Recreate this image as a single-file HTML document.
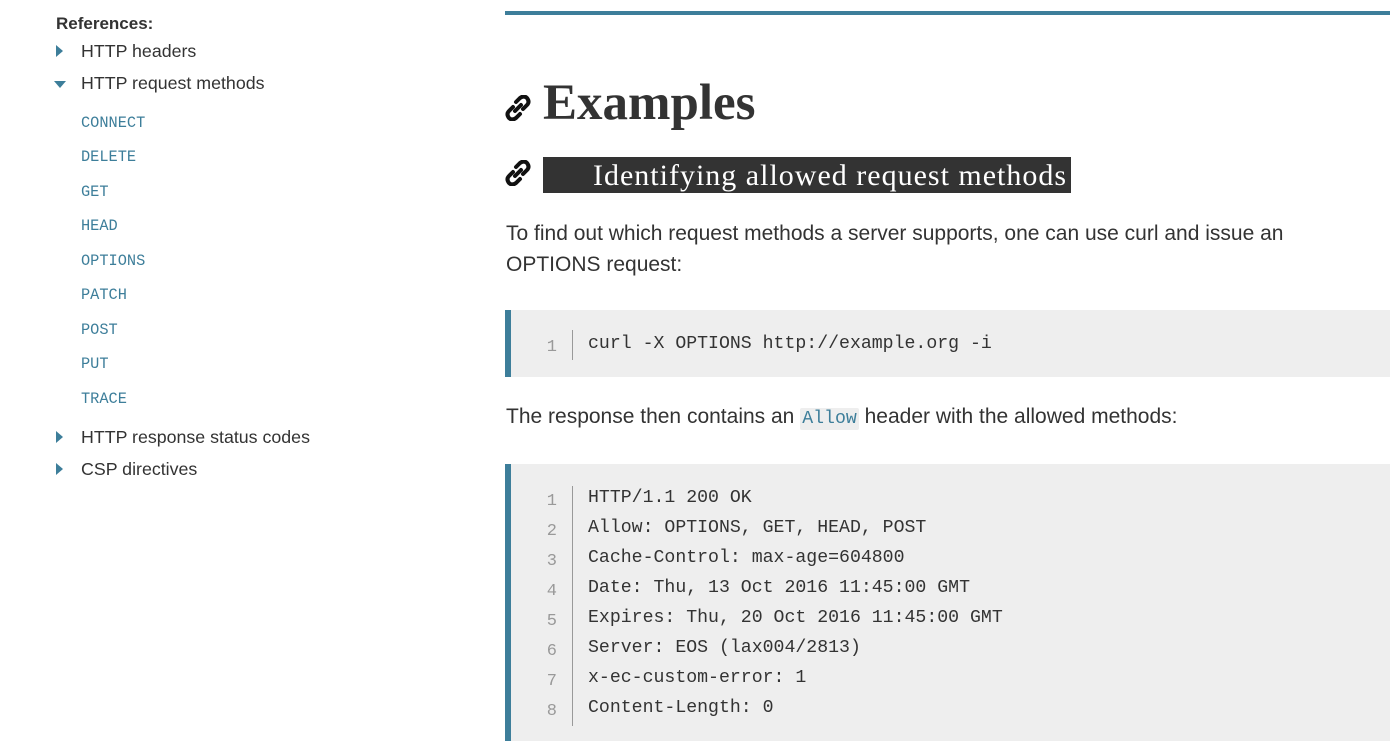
<!DOCTYPE html>
<html><head><style>
body{margin:0;width:1390px;height:755px;background:#fff;font-family:"Liberation Sans",sans-serif;color:#333;position:relative;overflow:hidden}
.a{position:absolute;white-space:nowrap}
.side{font-size:17.8px;color:#333}
.m{font-family:"Liberation Mono",monospace}
.sl{font-size:15.3px;color:#3d7e9a;left:81px}
.tri{position:absolute;width:0;height:0}
.p{font-size:21px;color:#333}
.code{position:absolute;left:505px;width:885px;background:#eee;border-left:6px solid #3d7e9a;box-sizing:border-box}
.ln{position:absolute;left:535px;width:22px;text-align:right;font-size:17px;color:#999;font-family:"Liberation Mono",monospace}
.cl{position:absolute;left:588px;font-size:18.2px;color:#333;font-family:"Liberation Mono",monospace;white-space:nowrap}
</style></head><body>
<div class="a side" style="left:56px;top:14px;font-weight:bold;font-size:17px">References:</div>
<div class="tri" style="left:56px;top:45px;border-left:7px solid #3d7e9a;border-top:6px solid transparent;border-bottom:6px solid transparent"></div>
<div class="a side" style="left:81px;top:41px">HTTP headers</div>
<div class="tri" style="left:54px;top:81px;border-top:7px solid #3d7e9a;border-left:6px solid transparent;border-right:6px solid transparent"></div>
<div class="a side" style="left:81px;top:73px">HTTP request methods</div>
<div class="a m sl" style="top:114px">CONNECT</div>
<div class="a m sl" style="top:148px">DELETE</div>
<div class="a m sl" style="top:183px">GET</div>
<div class="a m sl" style="top:217px">HEAD</div>
<div class="a m sl" style="top:252px">OPTIONS</div>
<div class="a m sl" style="top:286px">PATCH</div>
<div class="a m sl" style="top:321px">POST</div>
<div class="a m sl" style="top:355px">PUT</div>
<div class="a m sl" style="top:390px">TRACE</div>
<div class="tri" style="left:56px;top:431px;border-left:7px solid #3d7e9a;border-top:6px solid transparent;border-bottom:6px solid transparent"></div>
<div class="a side" style="left:81px;top:427px">HTTP response status codes</div>
<div class="tri" style="left:56px;top:463px;border-left:7px solid #3d7e9a;border-top:6px solid transparent;border-bottom:6px solid transparent"></div>
<div class="a side" style="left:81px;top:459px">CSP directives</div>

<div style="position:absolute;left:505px;top:11px;width:885px;height:4px;background:#3d7e9a"></div>

<svg style="position:absolute;left:505px;top:95px" width="26" height="26" viewBox="0 0 26 26"><g fill="none" stroke="#111" stroke-width="4" stroke-linecap="round"><path d="M11 7 L15 3 Q19 0 22 3 Q25 7 22 10 L18 14"/><path d="M15 19 L11 23 Q7 26 4 23 Q1 19 4 16 L8 12"/><path d="M10 16 L16 10"/></g></svg>
<div class="a" style="left:543px;top:74px;font-family:'Liberation Serif',serif;font-weight:bold;font-size:51px;color:#333">Examples</div>

<svg style="position:absolute;left:505px;top:160px" width="26" height="26" viewBox="0 0 26 26"><g fill="none" stroke="#111" stroke-width="4" stroke-linecap="round"><path d="M11 7 L15 3 Q19 0 22 3 Q25 7 22 10 L18 14"/><path d="M15 19 L11 23 Q7 26 4 23 Q1 19 4 16 L8 12"/><path d="M10 16 L16 10"/></g></svg>
<div style="position:absolute;left:543px;top:157px;width:528px;height:36px;background:#333"></div>
<div class="a" style="left:593px;top:157px;font-family:'Liberation Serif',serif;font-size:30px;letter-spacing:1px;line-height:38px;color:#fff">Identifying allowed request methods</div>

<div class="a p" style="left:506px;top:222px">To find out which request methods a server supports, one can use curl and issue an</div>
<div class="a p" style="left:506px;top:253px">OPTIONS request:</div>

<div class="code" style="top:310px;height:67px"></div>
<div style="position:absolute;left:572px;top:330px;width:1px;height:30px;background:#999"></div>
<div class="ln" style="top:338px">1</div>
<div class="cl" style="top:334px">curl -X OPTIONS http://example.org -i</div>

<div class="a p" style="left:506px;top:405px">The response then contains an <span class="m" style="background:#eee;color:#3d7e9a;font-size:18.2px;padding:1px 2px;border-radius:2px">Allow</span> header with the allowed methods:</div>

<div class="code" style="top:464px;height:277px"></div>
<div style="position:absolute;left:572px;top:486px;width:1px;height:240px;background:#999"></div>
<div class="ln" style="top:492px">1</div><div class="cl" style="top:488px">HTTP/1.1 200 OK</div>
<div class="ln" style="top:522px">2</div><div class="cl" style="top:518px">Allow: OPTIONS, GET, HEAD, POST</div>
<div class="ln" style="top:552px">3</div><div class="cl" style="top:548px">Cache-Control: max-age=604800</div>
<div class="ln" style="top:582px">4</div><div class="cl" style="top:578px">Date: Thu, 13 Oct 2016 11:45:00 GMT</div>
<div class="ln" style="top:612px">5</div><div class="cl" style="top:608px">Expires: Thu, 20 Oct 2016 11:45:00 GMT</div>
<div class="ln" style="top:642px">6</div><div class="cl" style="top:638px">Server: EOS (lax004/2813)</div>
<div class="ln" style="top:672px">7</div><div class="cl" style="top:668px">x-ec-custom-error: 1</div>
<div class="ln" style="top:702px">8</div><div class="cl" style="top:698px">Content-Length: 0</div>
</body></html>
